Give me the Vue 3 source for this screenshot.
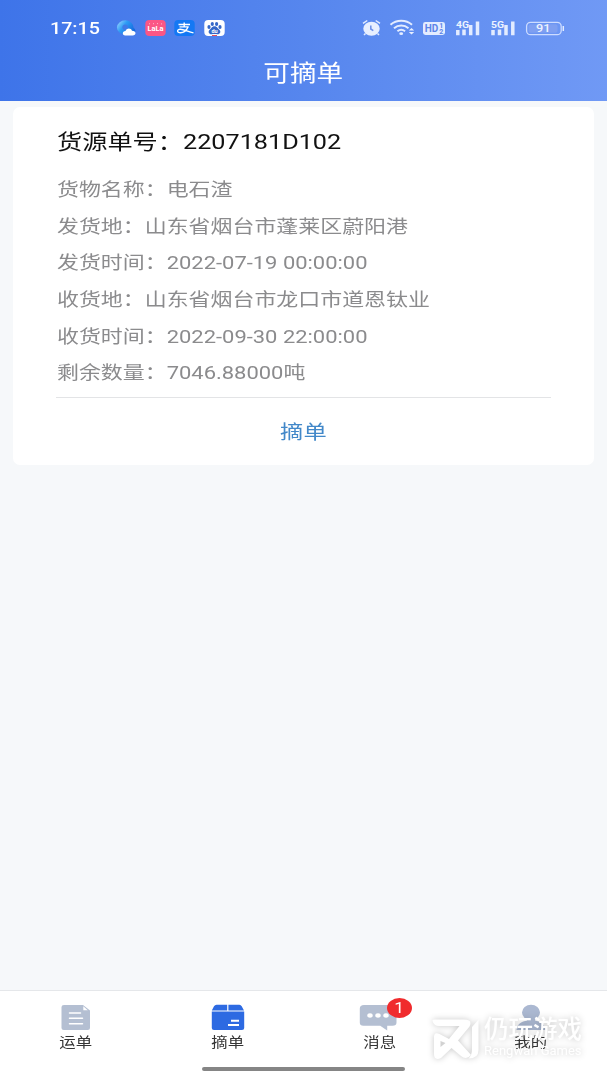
<script setup>
const rows = [
  { label: '货物名称：', value: '电石渣' },
  { label: '发货地：', value: '山东省烟台市蓬莱区蔚阳港' },
  { label: '发货时间：', value: '2022-07-19 00:00:00' },
  { label: '收货地：', value: '山东省烟台市龙口市道恩钛业' },
  { label: '收货时间：', value: '2022-09-30 22:00:00' },
  { label: '剩余数量：', value: '7046.88000吨' },
]
</script>

<template>
  <div class="screen">
    <header class="header">
      <div class="status">
        <span class="clock wide">17:15</span>
        <div class="apps">
          <svg width="20" height="18" viewBox="0 0 20 18">
            <defs>
              <linearGradient id="ring" x1="0" y1="0" x2="1" y2="0.6">
                <stop offset="0" stop-color="#a8dcff" />
                <stop offset="0.45" stop-color="#2d9cf5" />
                <stop offset="1" stop-color="#1468dd" />
              </linearGradient>
            </defs>
            <path d="M9.5 1.3a8.6 7.2 0 0 0 0 14.4h4a5 4 0 0 0 4-7A8.6 7.2 0 0 0 9.5 1.3z" fill="url(#ring)" />
            <circle cx="9.2" cy="8.3" r="2.8" fill="#3f7ae8" />
            <path d="M9.2 16.4c-3.300 0-3.200-4 .3-4.300.7-3.200 5.600-3.500 6.500-.3 4.600 0 4.500 4.600.6 4.600z" fill="#fff" />
          </svg>
          <svg width="21" height="18" viewBox="0 0 21 18">
            <rect x="0.300" y="1" width="20.400" height="16" rx="4" fill="#fb5685" />
            <text x="10.500" y="11.900" font-size="7.500" font-weight="700" font-family="Roboto, sans-serif" text-anchor="middle" textLength="16" lengthAdjust="spacingAndGlyphs" fill="#fff">LaLa</text>
            <path d="M4 5.200l1-.8M8 4.300l1 .8M12 5l1-.8M16 4.500l1 .8" stroke="#ffd0dd" stroke-width=".8" />
          </svg>
          <svg width="21" height="18" viewBox="0 0 21 18">
            <rect x="0.300" y="1" width="20.400" height="16" rx="4" fill="#1478f4" />
            <path d="M4.500 5.500h11.500M10.200 3.500v4.200M5.500 7.900h9.200M14 8c-1.500 3.400-4.500 5.800-7.500 5.800-4 0-3.600-3.600-.2-3.500 3.700.1 7.700 2.500 13.200 3.600" fill="none" stroke="#fff" stroke-width="1.400" />
          </svg>
          <svg width="21" height="18" viewBox="0 0 21 18">
            <rect x="0.300" y="1" width="20.400" height="16" rx="4" fill="#fff" />
            <g fill="#3568c8">
              <ellipse cx="5" cy="8" rx="1.600" ry="1.900" />
              <ellipse cx="8.300" cy="4.900" rx="1.600" ry="2" />
              <ellipse cx="12.600" cy="4.900" rx="1.600" ry="2" />
              <ellipse cx="16" cy="8" rx="1.600" ry="1.900" />
              <path d="M10.500 7.200c2.700 0 3.200 2.300 4.900 3.600 2 1.800.6 4.700-2 4.500-2.100-.4-3.700-.4-5.800 0-2.600.2-4-2.700-2-4.500 1.700-1.300 2.200-3.600 4.900-3.600z" />
            </g>
            <text x="10.500" y="13.900" font-size="5.500" font-weight="700" font-family="Roboto, sans-serif" text-anchor="middle" fill="#fff">du</text>
            <path d="M8 16.500h5" stroke="#e05060" />
          </svg>
        </div>
        <div class="signals">
          <svg class="signal-art" width="206" height="20" viewBox="0 0 206 20" fill="none" stroke="#e3ecff">
            <ellipse cx="10.500" cy="10.800" rx="8.200" ry="7" fill="#e7efff" stroke="none" />
            <path d="M2 5.400l4.300-2.900M14.700 2.500l4.300 2.900M4.500 15.500l-1.500 1.500M16.500 15.500l1.500 1.500" stroke-width="1.500" />
            <path d="M9.800 7.500v3.500l2.500 1.600" stroke="#6b8fea" stroke-width="1.500" />
            <path d="M29.500 6.800c6-5.300 15.500-5.300 21.500 0M33 10.200c4.200-3.600 10.300-3.600 14.500 0M36.400 13.200c2.400-1.900 5.300-1.900 7.700 0" stroke-width="2" />
            <ellipse cx="40.200" cy="15.700" rx="1.900" ry="1.400" fill="#e7efff" stroke="none" />
            <path d="M47.800 12.400l2.700-2.500 2.700 2.500zM47.800 14.100l2.700 2.500 2.700-2.500z" fill="#e7efff" stroke="none" />
            <rect x="62" y="4" width="22" height="13" rx="2.400" fill="#e3ecff" stroke="none" />
            <path d="M96.800 12v5.300M103 11.500v5.800M109.700 7v10.300M116.500 3.500v13.800M132 12v5.300M138.500 11.500v5.800M145 7v10.300M151.800 3.500v13.800" stroke-width="3.500" />
            <rect x="165.600" y="4.300" width="34.600" height="12.400" rx="4" stroke-width="1.300" stroke="#cddcff" />
            <rect x="167.500" y="6.200" width="29" height="8.600" rx="2" fill="#7e9ff1" stroke="none" />
            <path d="M202.300 8v5" stroke-width="1.500" />
            <g stroke="none" font-family="Roboto, sans-serif" font-weight="700" fill="#edf3ff">
              <text x="63.800" y="14.100" font-size="10" textLength="13.500" lengthAdjust="spacingAndGlyphs" fill="#5c84e8">HD</text>
              <text x="78.300" y="10" font-size="7" fill="#5c84e8">1</text>
              <text x="78.300" y="16" font-size="7" fill="#5c84e8">2</text>
              <text x="95" y="9.800" font-size="9.500" textLength="13" lengthAdjust="spacingAndGlyphs">4G</text>
              <text x="130" y="9.800" font-size="9.500" textLength="13" lengthAdjust="spacingAndGlyphs">5G</text>
              <text x="175" y="14.300" font-size="10.800" font-weight="500" textLength="14.500" lengthAdjust="spacingAndGlyphs">91</text>
            </g>
          </svg>
        </div>
      </div>
      <h1 class="title"><span class="wide center">可摘单</span></h1>
    </header>

    <main class="content">
      <article class="card">
        <h2 class="order"><span class="wide">货源单号：2207181D102</span></h2>
        <p v-for="row in rows" :key="row.label" class="row">
          <span class="wide">{{ row.label }}{{ row.value }}</span>
        </p>
        <button class="pick"><span class="wide center">摘单</span></button>
      </article>
    </main>

    <nav class="tabs">
      <div class="tab">
        <svg width="34" height="28" viewBox="0 0 34 28">
          <path d="M5 1h19l7 5.500V24q0 2-2.200 2H4.700q-2.200 0-2.200-2V3q0-2 2.500-2z" fill="#b4bfd2" />
          <path d="M24.300 2.300v4h4.500z" fill="#fff" />
          <path d="M10.500 9h11M10.500 14.200h13M10.500 19.700h13" stroke="#fff" stroke-width="1.500" stroke-linecap="round" />
        </svg>
        <span class="wide center">运单</span>
      </div>
      <div class="tab">
        <svg width="34" height="28" viewBox="0 0 34 28" fill="#2d6ae2">
          <path d="M5.500.8h10.700v5.700H.8L3 2.300Q3.900.8 5.500.8zM17.400.8h11q1.500 0 2.300 1.500l2.300 4.200H17.400zM.8 7.500h32.400V24q0 2-2.200 2H3Q.8 26 .8 24z" />
          <path d="M20 16.800h8M17 21h11" stroke="#fff" stroke-width="2" />
        </svg>
        <span class="wide center">摘单</span>
      </div>
      <div class="tab">
        <svg width="40" height="28" viewBox="0 0 40 28">
          <path d="M5 1h28.500q4 0 4 3.500v14q0 3.300-4 3.300H28.200V26.500L21.200 21.800H4.300Q.8 21.800.8 18.500V4.500Q.8 1 5 1z" fill="#b4bfd2" />
          <g fill="#fff"><ellipse cx="11" cy="11.500" rx="2.700" ry="2.200" /><ellipse cx="19" cy="11.500" rx="2.700" ry="2.200" /><ellipse cx="27" cy="11.500" rx="2.700" ry="2.200" /></g>
        </svg>
        <span class="badge"><span class="wide center">1</span></span>
        <span class="wide center">消息</span>
      </div>
      <div class="tab">
        <svg width="34" height="28" viewBox="0 0 34 28" fill="#abb8d1">
          <ellipse cx="17" cy="8.500" rx="9" ry="7.700" />
          <path d="M13 14h8v2.500c5 1.300 10 3 10.500 9.500h-29c.5-6.500 5.500-8.200 10.500-9.500z" />
        </svg>
        <span class="wide center">我的</span>
      </div>
      <div class="home-bar"></div>
      <div class="watermark">
        <svg width="50" height="44" viewBox="0 0 50 44">
          <path d="M5 0.500H33Q42 .5 38.500 7.500L27 21.500L40 36Q35.500 41.500 30 37L20.500 29L10 39Q3 42 3 35V18Q3 12.500 8.500 15L18 20L28.500 7H8Q3 7 1.500 2Q1 .5 5 .5ZM9.500 22V28L14.500 24Z" fill="#fff" fill-rule="evenodd" />
          <path d="M41 8L47.500 .8V31Q47.500 39.500 37.500 39.500Q41 36 41 31Z" fill="#fff" />
        </svg>
        <div class="mark-text">
          <span class="mark-cn">仍玩游戏</span>
          <span class="mark-en">Rengwan Games</span>
        </div>
      </div>
    </nav>
  </div>
</template>

<style>
body { background: #f6f8fa; }
</style>

<style scoped>
.screen {
  width: 607px;
  height: 1080px;
  display: flex;
  flex-direction: column;
  overflow: hidden;
  background: #f6f8fa;
  font-family: Roboto, "Noto Sans CJK SC", sans-serif;
}
.wide {
  display: inline-block;
  white-space: nowrap;
  transform: scaleX(1.2);
  transform-origin: left center;
}
.wide.center { transform-origin: center; }
.header {
  height: 100.500px;
  flex: none;
  background: linear-gradient(90deg, #3e74e9, #5686ee 50%, #7099f5);
  color: #fff;
}
.status {
  display: flex;
  align-items: center;
  height: 56px;
  box-sizing: border-box;
  padding-left: 49.500px;
}
.clock {
  width: 66.500px;
  font-size: 16.400px;
  font-weight: 500;
}
.apps {
  display: flex;
  gap: 8.500px;
  width: 245px;
}
.signals { display: flex; }
.signal-art { margin-top: -1px; }
.title {
  margin: 0;
  height: 34px;
  line-height: 34px;
  text-align: center;
  font-size: 22.200px;
  font-weight: 400;
}
.content { flex: 1; padding: 6.500px 13px 0; }
.card {
  height: 357.500px;
  box-sizing: border-box;
  padding: 17px 44px 0;
  border-radius: 7px;
  background: #fff;
}
.order {
  margin: 0 0 12px;
  height: 36px;
  line-height: 36px;
  font-size: 21px;
  font-weight: 400;
  color: #111;
}
.row {
  margin: 0;
  height: 36.700px;
  line-height: 36.700px;
  font-size: 18.300px;
  color: #8b8b8d;
}
.pick {
  display: block;
  width: 495px;
  height: 67px;
  margin: 5px 0 0 -1px;
  padding: 2px 0 0;
  border: 0;
  border-top: 1px solid #e3e4e6;
  background: none;
  font: 400 19.400px/66px Roboto, "Noto Sans CJK SC", sans-serif;
  color: #4288c9;
}
.tabs {
  position: relative;
  display: flex;
  height: 90px;
  flex: none;
  box-sizing: border-box;
  border-top: 1px solid #e5e7ea;
  background: #fff;
}
.tab {
  position: relative;
  flex: 1;
  display: flex;
  flex-direction: column;
  align-items: center;
  padding-top: 13px;
  font-size: 13.700px;
  line-height: 20px;
  color: #353535;
}
.badge {
  position: absolute;
  left: 83px;
  top: 7px;
  width: 25px;
  height: 20px;
  border-radius: 50%;
  background: #f02b2d;
  color: #fff;
  font-size: 14.500px;
  line-height: 21px;
  text-align: center;
}
.home-bar {
  position: absolute;
  left: 202px;
  bottom: 9.500px;
  width: 203px;
  height: 4px;
  border-radius: 2px;
  background: #858585;
}
.watermark {
  position: absolute;
  left: 431px;
  top: 26px;
  display: flex;
  gap: 3px;
  color: #fff;
  filter: drop-shadow(0 0 3px rgba(0, 0, 0, 0.22));
}
.watermark svg { margin-top: 2px; }
.mark-text { display: flex; flex-direction: column; }
.mark-cn {
  font-size: 24.500px;
  line-height: 25px;
  font-weight: 500;
}
.mark-en {
  font-size: 13px;
  line-height: 18px;
  white-space: nowrap;
}
</style>
